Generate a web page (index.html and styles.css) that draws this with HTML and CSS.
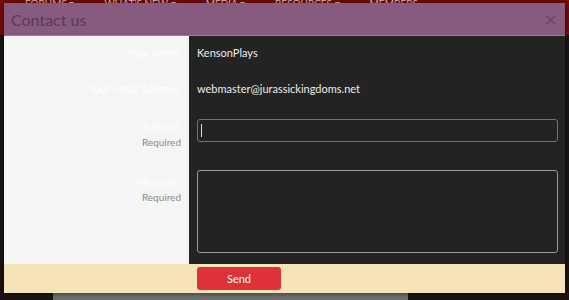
FILE: index.html
```html
<!DOCTYPE html>
<html lang="en">
<head>
<meta charset="UTF-8">
<meta name="viewport" content="width=device-width, initial-scale=1.0">
<title>Contact us</title>
<link rel="stylesheet" href="styles.css">
</head>
<body>

<!-- page behind the overlay -->
<div class="nav">
  <span>FORUMS &#9662;</span>
  <span>WHAT'S NEW &#9662;</span>
  <span>MEDIA &#9662;</span>
  <span>RESOURCES &#9662;</span>
  <span>MEMBERS</span>
</div>
<div class="page">
  <div class="strip"></div>
</div>

<div class="overlay">
  <div class="modal-head">
    <h2>Contact us</h2>
    <span class="close">&times;</span>
  </div>
  <form class="modal-body" method="post" action="misc/contact">
    <div class="label row-name">Your name:</div>
    <div class="field row-name">KensonPlays</div>

    <div class="label row-email">Your email address:</div>
    <div class="field row-email">webmaster@jurassickingdoms.net</div>

    <div class="label row-subject">Subject:<small>Required</small></div>
    <div class="field row-subject">
      <div class="input-wrap">
        <input type="text" class="input subject" name="subject">
        <span class="caret"></span>
      </div>
    </div>

    <div class="label row-message">Message:<small>Required</small></div>
    <div class="field row-message"><textarea class="input message" name="message"></textarea></div>
  </form>
  <div class="modal-foot">
    <button type="submit" class="send">Send</button>
  </div>
</div>

</body>
</html>
```

FILE: styles.css
```css
body {
  margin: 0;
  font-family: Lato, "Open Sans", sans-serif;
  background-color: #1b1414;
  height: 300px;
  overflow: hidden;
}

.nav {
  height: 35px;
  background-color: #7d0b0b;
  color: #e9c9c9;
  font-size: 10px;
  display: flex;
  gap: 30px;
  padding-left: 25px;
  line-height: 6px;
  overflow: hidden;
}

.page {
  padding-top: 258px;
}

.strip {
  margin-left: 53px;
  width: 355px;
  height: 20px;
  background-color: #6e6e6e;
}

/* contact overlay */
.overlay {
  position: fixed;
  top: 3px;
  left: 4px;
  width: 561px;
  box-shadow: 0 0 6px rgba(0, 0, 0, 0.6);
}

.modal-head {
  height: 32px;
  background-color: #875a80;
  border-bottom: 1px solid #a07a9a;
  display: flex;
  align-items: center;
  justify-content: space-between;
  padding: 0 8px 0 7px;
}

.modal-head h2 {
  margin: 0;
  font-size: 16px;
  font-weight: normal;
  color: #5a395a;
}

.close {
  font-size: 22px;
  color: #6b4868;
  line-height: 1;
}

.modal-body {
  display: grid;
  grid-template-columns: 185px 1fr;
  align-items: start;
  background: linear-gradient(to right, #f5f5f5 185px, #232323 185px);
  padding-bottom: 11px;
  margin: 0;
}

.label {
  text-align: right;
  padding-right: 8px;
  font-size: 11px;
  color: #ffffff;
  line-height: 14px;
}

.label small {
  display: block;
  color: #8a8a8a;
  font-size: 10px;
  margin-top: 1px;
}

.field {
  padding-left: 8px;
  padding-right: 7px;
  color: #ececec;
  font-size: 11px;
  line-height: 14px;
}

.row-name { padding-top: 10px; }
.row-email { padding-top: 22px; }
.field.row-subject { padding-top: 23px; }
.label.row-subject { padding-top: 24px; margin-bottom: -20px; }
.field.row-message { padding-top: 28px; }
.label.row-message { padding-top: 33px; }

.input-wrap {
  position: relative;
}

.input {
  display: block;
  width: 100%;
  box-sizing: border-box;
  background-color: #232323;
  border-radius: 3px;
  color: #eee;
  font-family: inherit;
  outline: none;
  margin: 0;
}

.subject {
  height: 23px;
  border: 1px solid #b4565b;
}

.caret {
  position: absolute;
  left: 4px;
  top: 5px;
  width: 1px;
  height: 13px;
  background-color: #e0e0e0;
}

.message {
  height: 83px;
  border: 1px solid #9a9a9a;
  resize: none;
}

.modal-foot {
  height: 29px;
  background-color: #f6e4b9;
  padding-left: 193px;
  display: flex;
  align-items: center;
}

.send {
  width: 84px;
  height: 23px;
  background-color: #dc3238;
  color: #fff;
  border: none;
  border-radius: 3px;
  font-family: inherit;
  font-size: 11px;
  cursor: pointer;
}
```
